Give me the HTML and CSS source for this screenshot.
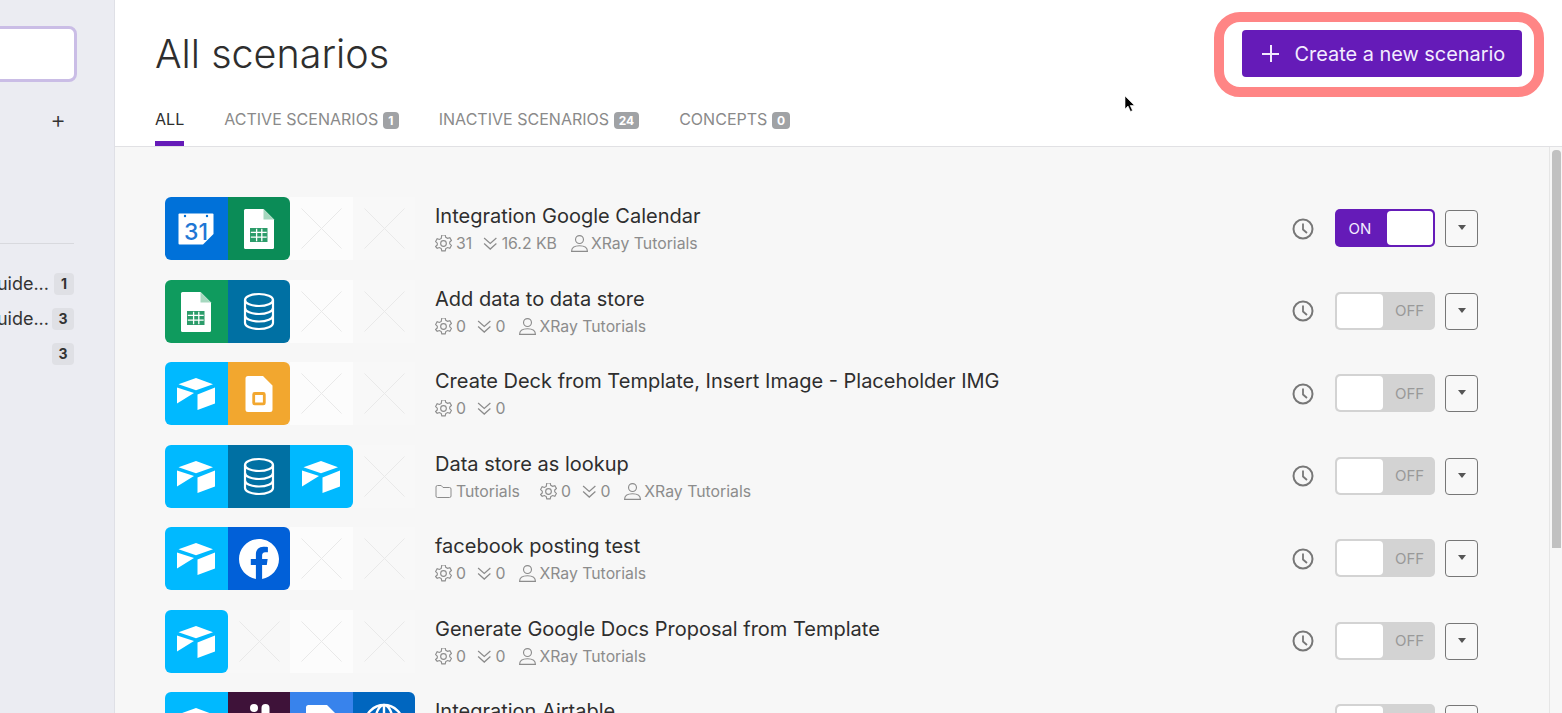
FILE: index.html
```html
<!DOCTYPE html>
<html lang="en">
<head>
<meta charset="utf-8">
<title>All scenarios</title>
<link rel="stylesheet" href="styles.css">
</head>
<body>
<svg class="sprite" width="0" height="0" aria-hidden="true">
  <defs>
    <symbol id="i-x" viewBox="0 0 62.5 63"><path d="M11.5 11.5l40 40M51.5 11.5l-40 40" fill="none" stroke="#e9e9e9" stroke-width="1"/></symbol>
    <symbol id="i-gcal" viewBox="0 0 62.5 63">
      <path d="M13.5 17.5a1 1 0 0 1 1-1H47.5a1 1 0 0 1 1 1V37L38 47.500H14.500a1 1 0 0 1-1-1z" fill="#fff"/>
      <circle cx="20" cy="19" r="1.200" fill="#0071d9"/><circle cx="42" cy="19" r="1.200" fill="#0071d9"/>
      <text x="31" y="43" text-anchor="middle" font-family="Inter, sans-serif" font-size="23" font-weight="500" fill="#1f77d4">31</text>
    </symbol>
    <symbol id="i-sheet" viewBox="0 0 62.5 63">
      <path d="M17.500 12H35.500L46 22.500V50.500a1.500 1.500 0 0 1-1.500 1.500H17.500A1.500 1.500 0 0 1 16 50.500V13.500A1.500 1.500 0 0 1 17.500 12z" fill="#fff"/>
      <path d="M35.500 12L46 22.500H35.500z" fill="#a6d8bf"/>
      <path d="M22 31H39.500V45H22z" fill="#2c9c6a"/>
      <path d="M22.800 35.300H38.700M22.800 40.200H38.700M28.600 31.800V44.200M33.800 31.800V44.200" stroke="#fff" stroke-width="1.300" fill="none"/>
    </symbol>
    <symbol id="i-db" viewBox="0 0 62.5 63" fill="none" stroke="#fff" stroke-width="2.200">
      <ellipse cx="31" cy="20" rx="14" ry="6"/>
      <path d="M17 20V43C17 46.300 23.300 49 31 49S45 46.300 45 43V20"/>
      <path d="M17 28C17 31.300 23.300 34 31 34S45 31.300 45 28"/>
      <path d="M17 35.500C17 38.800 23.300 41.500 31 41.500S45 38.800 45 35.500"/>
    </symbol>
    <symbol id="i-air" viewBox="0 0 62.500 63" fill="#fff">
      <path d="M31 16L48 22.300L31 28.300L13.500 22.300z"/>
      <path d="M12 25.500L29 31L12 41.500z"/>
      <path d="M32.500 32.500L50 25.500V41.500L32.500 48z"/>
    </symbol>
    <symbol id="i-slides" viewBox="0 0 62.500 63">
      <path d="M20 14H35L44.500 23.500V47.500a2.500 2.500 0 0 1-2.500 2.500H20a2.500 2.500 0 0 1-2.500-2.500V16.500A2.500 2.500 0 0 1 20 14z" fill="#fff"/>
      <rect x="25.700" y="31.500" width="10.600" height="10.400" rx="1" fill="none" stroke="#f2a72f" stroke-width="2.800"/>
    </symbol>
    <symbol id="i-fb" viewBox="0 0 24 24"><path fill="#fff" d="M24 12.070C24 5.400 18.630 0 12 0S0 5.400 0 12.070c0 6.020 4.390 11.020 10.130 11.930v-8.440H7.080v-3.490h3.050V9.410c0-3.020 1.790-4.690 4.530-4.690 1.310 0 2.680.24 2.680.24v2.970h-1.510c-1.490 0-1.960.93-1.960 1.880v2.260h3.330l-.53 3.490h-2.800V24C19.610 23.090 24 18.090 24 12.070z"/></symbol>
    <symbol id="i-slack" viewBox="0 0 62.500 63" fill="#fff">
      <rect x="33.500" y="12" width="8" height="20" rx="4"/>
      <rect x="22" y="12" width="8" height="8" rx="4"/>
      <rect x="22" y="23" width="8" height="20" rx="4"/>
    </symbol>
    <symbol id="i-docs" viewBox="0 0 62.500 63"><path d="M18.500 13H37L47 23V50H16V15.500A2.500 2.500 0 0 1 18.500 13z" fill="#fff"/></symbol>
    <symbol id="i-http" viewBox="0 0 62.500 63" fill="none" stroke="#fff" stroke-width="2.400">
      <circle cx="31" cy="32" r="19"/><ellipse cx="31" cy="32" rx="9" ry="19"/><path d="M31 13V51M13 26H49M13 38H49"/>
    </symbol>
    <symbol id="i-gear" viewBox="1 1.500 15 15" fill="none" stroke="#8c8c8c" stroke-width="1">
      <path d="M7 1.500h3l.5 2 1.600.9 2-.6 1.400 2.500-1.500 1.400v1.600l1.500 1.400-1.400 2.500-2-.6-1.600.9-.5 2H7l-.5-2-1.600-.9-2 .6L1.500 11.700 3 10.300V8.700L1.500 7.300 2.900 4.800l2 .6 1.600-.9z"/>
      <circle cx="8.500" cy="9" r="2.500"/>
    </symbol>
    <symbol id="i-chev" viewBox="2 2 13 13" fill="none" stroke="#8c8c8c" stroke-width="1.100">
      <path d="M3 3.500l5.500 5 5.500-5M3 8.500l5.500 5 5.500-5"/>
    </symbol>
    <symbol id="i-user" viewBox="1 1 15 15" fill="none" stroke="#8c8c8c" stroke-width="1">
      <circle cx="8.500" cy="5" r="3.500"/><path d="M1.500 15.500c0-3.500 3-5 7-5s7 1.500 7 5z"/>
    </symbol>
    <symbol id="i-folder" viewBox="0 0 17 17" fill="none" stroke="#8c8c8c" stroke-width="1">
      <path d="M1 4a1.500 1.500 0 0 1 1.500-1.500h3.700L8 4.500h6.500A1.500 1.500 0 0 1 16 6v7a1.500 1.500 0 0 1-1.500 1.500h-12A1.500 1.500 0 0 1 1 13z"/>
    </symbol>
    <symbol id="i-clock" viewBox="0 0 22 22" fill="none" stroke="#777" stroke-width="2">
      <circle cx="11" cy="11" r="9.500"/><path d="M11 5.500V11.500L15 15" stroke-width="1.800"/>
    </symbol>
  </defs>
</svg>

<div class="app">
  <aside class="sidebar">
    <div class="search"></div>
    <div class="add-row"><span class="add">+</span></div>
    <div class="side-line"></div>
    <div class="side-item"><span class="side-text">Guide...</span><span class="side-badge narrow">1</span></div>
    <div class="side-item"><span class="side-text tight">Guide...</span><span class="side-badge">3</span></div>
    <div class="side-item"><span class="side-badge">3</span></div>
  </aside>

  <main class="main">
    <header class="header">
      <div class="head-top">
        <h1 class="title">All scenarios</h1>
        <button class="create"><span class="create-plus"></span>Create a new scenario</button>
      </div>
      <nav class="tabs">
        <a class="tab active">ALL</a>
        <a class="tab">ACTIVE SCENARIOS<span class="tab-badge">1</span></a>
        <a class="tab">INACTIVE SCENARIOS<span class="tab-badge">24</span></a>
        <a class="tab">CONCEPTS<span class="tab-badge">0</span></a>
      </nav>
    </header>

    <div class="content">
      <div class="list">

        <div class="row">
          <div class="tiles">
            <div class="tile gcal rl"><svg><use href="#i-gcal"/></svg></div>
            <div class="tile sheet-d rr"><svg><use href="#i-sheet"/></svg></div>
            <div class="tile"><svg><use href="#i-x"/></svg></div>
            <div class="tile"><svg><use href="#i-x"/></svg></div>
          </div>
          <div class="info">
            <div class="name">Integration Google Calendar</div>
            <div class="meta">
              <span class="m"><svg class="mi"><use href="#i-gear"/></svg>31</span>
              <span class="m"><svg class="mi chev"><use href="#i-chev"/></svg>16.2 KB</span>
              <span class="m user"><svg class="mi"><use href="#i-user"/></svg>XRay Tutorials</span>
            </div>
          </div>
          <svg class="clock"><use href="#i-clock"/></svg>
          <div class="toggle on"><span class="tl">ON</span><span class="knob"></span></div>
          <button class="drop"><span class="caret"></span></button>
        </div>

        <div class="row">
          <div class="tiles">
            <div class="tile sheet rl"><svg><use href="#i-sheet"/></svg></div>
            <div class="tile db rr"><svg><use href="#i-db"/></svg></div>
            <div class="tile"><svg><use href="#i-x"/></svg></div>
            <div class="tile"><svg><use href="#i-x"/></svg></div>
          </div>
          <div class="info">
            <div class="name">Add data to data store</div>
            <div class="meta">
              <span class="m"><svg class="mi"><use href="#i-gear"/></svg>0</span>
              <span class="m"><svg class="mi chev"><use href="#i-chev"/></svg>0</span>
              <span class="m user"><svg class="mi"><use href="#i-user"/></svg>XRay Tutorials</span>
            </div>
          </div>
          <svg class="clock"><use href="#i-clock"/></svg>
          <div class="toggle"><span class="knob"></span><span class="tl">OFF</span></div>
          <button class="drop"><span class="caret"></span></button>
        </div>

        <div class="row">
          <div class="tiles">
            <div class="tile air rl"><svg><use href="#i-air"/></svg></div>
            <div class="tile slides rr"><svg><use href="#i-slides"/></svg></div>
            <div class="tile"><svg><use href="#i-x"/></svg></div>
            <div class="tile"><svg><use href="#i-x"/></svg></div>
          </div>
          <div class="info">
            <div class="name">Create Deck from Template, Insert Image - Placeholder IMG</div>
            <div class="meta">
              <span class="m"><svg class="mi"><use href="#i-gear"/></svg>0</span>
              <span class="m"><svg class="mi chev"><use href="#i-chev"/></svg>0</span>
            </div>
          </div>
          <svg class="clock"><use href="#i-clock"/></svg>
          <div class="toggle"><span class="knob"></span><span class="tl">OFF</span></div>
          <button class="drop"><span class="caret"></span></button>
        </div>

        <div class="row">
          <div class="tiles">
            <div class="tile air rl"><svg><use href="#i-air"/></svg></div>
            <div class="tile db"><svg><use href="#i-db"/></svg></div>
            <div class="tile air rr"><svg><use href="#i-air"/></svg></div>
            <div class="tile"><svg><use href="#i-x"/></svg></div>
          </div>
          <div class="info">
            <div class="name">Data store as lookup</div>
            <div class="meta">
              <span class="m folder"><svg class="mi"><use href="#i-folder"/></svg>Tutorials</span>
              <span class="m"><svg class="mi"><use href="#i-gear"/></svg>0</span>
              <span class="m"><svg class="mi chev"><use href="#i-chev"/></svg>0</span>
              <span class="m user"><svg class="mi"><use href="#i-user"/></svg>XRay Tutorials</span>
            </div>
          </div>
          <svg class="clock"><use href="#i-clock"/></svg>
          <div class="toggle"><span class="knob"></span><span class="tl">OFF</span></div>
          <button class="drop"><span class="caret"></span></button>
        </div>

        <div class="row">
          <div class="tiles">
            <div class="tile air rl"><svg><use href="#i-air"/></svg></div>
            <div class="tile fb rr"><svg class="fb-logo"><use href="#i-fb"/></svg></div>
            <div class="tile"><svg><use href="#i-x"/></svg></div>
            <div class="tile"><svg><use href="#i-x"/></svg></div>
          </div>
          <div class="info">
            <div class="name">facebook posting test</div>
            <div class="meta">
              <span class="m"><svg class="mi"><use href="#i-gear"/></svg>0</span>
              <span class="m"><svg class="mi chev"><use href="#i-chev"/></svg>0</span>
              <span class="m user"><svg class="mi"><use href="#i-user"/></svg>XRay Tutorials</span>
            </div>
          </div>
          <svg class="clock"><use href="#i-clock"/></svg>
          <div class="toggle"><span class="knob"></span><span class="tl">OFF</span></div>
          <button class="drop"><span class="caret"></span></button>
        </div>

        <div class="row">
          <div class="tiles">
            <div class="tile air rl rr"><svg><use href="#i-air"/></svg></div>
            <div class="tile"><svg><use href="#i-x"/></svg></div>
            <div class="tile"><svg><use href="#i-x"/></svg></div>
            <div class="tile"><svg><use href="#i-x"/></svg></div>
          </div>
          <div class="info">
            <div class="name">Generate Google Docs Proposal from Template</div>
            <div class="meta">
              <span class="m"><svg class="mi"><use href="#i-gear"/></svg>0</span>
              <span class="m"><svg class="mi chev"><use href="#i-chev"/></svg>0</span>
              <span class="m user"><svg class="mi"><use href="#i-user"/></svg>XRay Tutorials</span>
            </div>
          </div>
          <svg class="clock"><use href="#i-clock"/></svg>
          <div class="toggle"><span class="knob"></span><span class="tl">OFF</span></div>
          <button class="drop"><span class="caret"></span></button>
        </div>

        <div class="row">
          <div class="tiles">
            <div class="tile air rl"><svg><use href="#i-air"/></svg></div>
            <div class="tile slack"><svg><use href="#i-slack"/></svg></div>
            <div class="tile docs"><svg><use href="#i-docs"/></svg></div>
            <div class="tile http rr"><svg><use href="#i-http"/></svg></div>
          </div>
          <div class="info">
            <div class="name">Integration Airtable</div>
            <div class="meta">
              <span class="m"><svg class="mi"><use href="#i-gear"/></svg>0</span>
              <span class="m"><svg class="mi chev"><use href="#i-chev"/></svg>0</span>
            </div>
          </div>
          <svg class="clock"><use href="#i-clock"/></svg>
          <div class="toggle"><span class="knob"></span><span class="tl">OFF</span></div>
          <button class="drop"><span class="caret"></span></button>
        </div>

      </div>
      <div class="scrollbar"><div class="thumb"></div></div>
    </div>
  </main>
</div>

<div class="highlight"></div>
<svg class="cursor" viewBox="0 0 12 18"><path d="M1 1V14L4 11L6.500 16.500L8.500 15.500L6.200 10.500H10.500z" fill="#000" stroke="#fff" stroke-width=".6"/></svg>
</body>
</html>
```

FILE: styles.css
```css
* { box-sizing: border-box; }
html, body { margin: 0; height: 100%; overflow: hidden; }
body { font-family: Inter, "Liberation Sans", sans-serif; color: #2e2e2e; background: #fff; }
.sprite { position: absolute; }
svg { display: block; }

.app { display: flex; height: 713px; }

/* sidebar */
.sidebar { width: 115px; flex: none; background: #ebecf2; border-right: 1px solid #dfe0e6; padding: 26px 40px 0 0; overflow: hidden; }
.search { height: 56px; margin: 0 -3px 0 -20px; background: #fff; border: 3px solid #cabde6; border-radius: 8px; }
.add-row { display: flex; justify-content: flex-end; height: 30px; margin-top: 24px; }
.add { width: 16px; margin-right: 8px; font-size: 24px; line-height: 28px; font-weight: 300; color: #333; text-align: center; }
.side-line { height: 1px; background: #d8d9de; margin-top: 107px; margin-bottom: 22px; }
.side-item { display: flex; justify-content: flex-end; align-items: center; gap: 5px; height: 35px; white-space: nowrap; }
.side-text { flex: none; font-size: 18px; color: #333; }
.side-text.tight { margin-right: -2px; }
.side-badge { flex: none; width: 22px; height: 22px; border-radius: 4px; background: #dfe0e5; color: #333; font-size: 14px; font-weight: 700; line-height: 22px; text-align: center; }
.side-badge.narrow { width: 20px; }

/* main */
.main { flex: 1; min-width: 0; display: flex; flex-direction: column; }
.header { height: 147px; flex: none; padding: 0 40px; border-bottom: 1px solid #e1e1e4; background: #fff; }
.head-top { display: flex; justify-content: space-between; align-items: flex-start; height: 99px; padding-top: 30px; }
.title { margin: 1px 0 0; font-size: 39.500px; line-height: 47px; font-weight: 300; color: #2e2e2e; }
.create { display: flex; align-items: center; width: 280px; height: 47px; padding: 0 0 0 20px; border: 0; border-radius: 4px; background: #651bb8; color: #f3ecff; font: 400 19.900px Inter, sans-serif; }
.create-plus { width: 17px; height: 17px; margin-right: 15.500px; background: linear-gradient(#f3ecff, #f3ecff) center / 100% 2px no-repeat, linear-gradient(#f3ecff, #f3ecff) center / 2px 100% no-repeat; }

.tabs { display: flex; gap: 40px; height: 47px; }
.tab { display: flex; align-items: flex-start; height: 47px; padding-top: 10px; font-size: 16.050px; line-height: 20px; color: #8a8a8a; }
.tab.active { color: #2e2e2e; border-bottom: 5px solid #651bb8; height: 47px; }
.tab-badge { margin: 3px 0 0 4.500px; min-width: 16px; height: 17px; padding: 0 5px; border-radius: 4px; background: #a0a2a5; color: #fff; font-size: 12px; line-height: 17px; font-weight: 700; text-align: center; }

.content { flex: 1; min-height: 0; display: flex; background: #f7f7f7; overflow: hidden; }
.list { flex: 1; min-width: 0; padding: 50px 71px 0 50px; }
.scrollbar { width: 13px; flex: none; border-left: 1px solid #e6e6e6; padding: 3px 2px 0 2px; }
.thumb { height: 398px; background: #c1c1c1; border-radius: 4px 4px 0 0; width: 9px; }

.row { display: flex; align-items: center; height: 63px; margin-bottom: 19.500px; }
.tiles { display: flex; width: 250.400px; flex: none; }
.tile { width: 62.600px; height: 63px; flex: none; background: #f8f8f8; }
.tile:nth-child(3) { background: #fcfcfc; }
.tile svg { width: 62.500px; height: 63px; }
.tile .fb-logo { width: 40px; height: 40px; margin: 12px 0 0 11px; }
.tile.rl { border-top-left-radius: 6px; border-bottom-left-radius: 6px; }
.tile.rr { border-top-right-radius: 6px; border-bottom-right-radius: 6px; }
.tile.gcal { background: #0071d9; }
.tile.sheet-d { background: #0b8c57; }
.tile.sheet { background: #0f9b5e; }
.tile.db { background: #0070a3; }
.tile.air { background: #00b9ff; }
.tile.slides { background: #f2a72f; }
.tile.fb { background: #0160d8; }
.tile.slack { background: #3e1239; }
.tile.docs { background: #3883ec; }
.tile.http { background: #0066bf; }

.info { flex: 1; min-width: 0; margin-left: 19.600px; }
.name { font-size: 20px; line-height: 24px; color: #2e2e2e; margin-top: 1.500px; }
.meta { display: flex; gap: 11px; margin-top: 4.500px; height: 22px; align-items: center; font-size: 15.800px; color: #8c8c8c; }
.m { display: flex; align-items: center; gap: 4px; }
.m.user { margin-left: 3px; gap: 3px; }
.m.folder { margin-right: 9px; }
.mi { width: 17px; height: 17px; flex: none; }
.mi.chev { width: 14.500px; }

.clock { width: 22px; height: 22px; flex: none; margin-right: 21px; }
.toggle { display: flex; align-items: center; width: 100px; height: 38px; flex: none; margin-top: -1px; padding: 2px; border-radius: 5px; background: #d3d3d3; color: #999; font-size: 15px; }
.knob { display: block; width: 46px; height: 34px; background: #fff; border-radius: 4px; }
.tl { flex: 1; padding-left: 3px; text-align: center; }
.toggle.on { background: #651bb8; color: #f3ecff; }
.toggle.on .tl { padding: 0 4px 0 0; }
.drop { display: flex; align-items: center; justify-content: center; width: 33px; height: 37px; flex: none; margin-left: 10px; padding: 0; border: 1px solid #777; border-radius: 4px; background: #f8f8f8; }
.caret { width: 0; height: 0; border-left: 4.500px solid transparent; border-right: 4.500px solid transparent; border-top: 5px solid #555; margin-bottom: 2px; }

/* overlays */
.highlight { position: absolute; left: 1214px; top: 12px; width: 330px; height: 85px; border: 10px solid #ff8585; border-radius: 26px; }
.cursor { position: absolute; left: 1124px; top: 95px; width: 12px; height: 18px; }
```
